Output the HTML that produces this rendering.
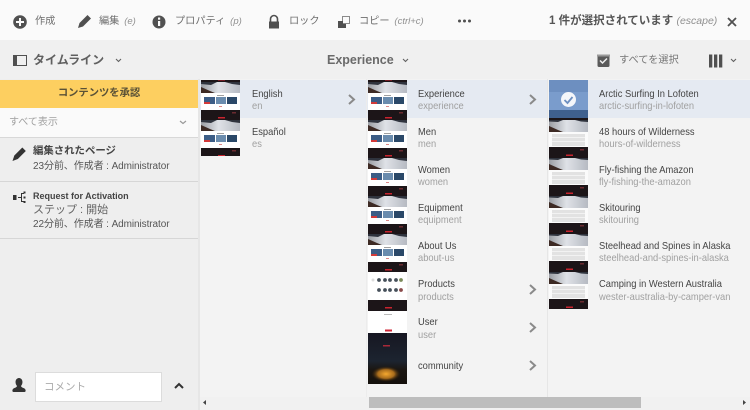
<!DOCTYPE html>
<html><head><meta charset="utf-8">
<style>
html,body{margin:0;padding:0;width:750px;height:410px;overflow:hidden;background:#f3f3f3}
body{font-family:"Liberation Sans","Noto Sans CJK JP",sans-serif;color:#4b4b4b}
#w{position:relative;width:750px;height:410px;overflow:hidden;filter:blur(.3px)}
.a{position:absolute;white-space:nowrap}
.t{font-size:10.5px;color:#444;line-height:12px;transform:scaleX(.89);transform-origin:0 0}
.s{font-size:10.5px;color:#a0a0a0;line-height:12px;transform:scaleX(.89);transform-origin:0 0}
.tb{font-size:10.2px;color:#6e6e6e;line-height:14px}
i{font-size:9.5px;color:#909090;font-style:italic;margin-left:2px}
svg{position:absolute;overflow:visible}
</style></head><body><div id="w">
<div class="a" style="left:0;top:0;width:750px;height:40px;background:#fafafa"></div>
<div class="a" style="left:0;top:40px;width:750px;height:39px;background:#f0f0f0"></div>

<svg style="left:0;top:0" width="750" height="80">
<circle cx="20" cy="22" r="6.800" fill="#505050"/><path d="M20 18v8M16 22h8" stroke="#fafafa" stroke-width="2"/>
<path d="M78 28l1.500-5 8-8 3.500 3.500-8 8z" fill="#505050"/>
<circle cx="159" cy="22" r="6.500" fill="#505050"/><rect x="158" y="21" width="2.200" height="5" fill="#fafafa"/><rect x="158" y="17.500" width="2.200" height="2.200" fill="#fafafa"/>
<path d="M270.500 21.500v-2.500a3.500 3.500 0 0 1 7 0v2.500" fill="none" stroke="#505050" stroke-width="1.600"/><rect x="269" y="21.500" width="10" height="7" fill="#505050"/>
<rect x="342.500" y="16.500" width="7" height="7" fill="#fafafa" stroke="#8a8a8a" stroke-width="1"/><rect x="338" y="21" width="5" height="7" fill="#505050"/><rect x="338" y="24" width="8" height="4" fill="#505050"/>
<circle cx="459.500" cy="21" r="1.500" fill="#505050"/><circle cx="464.500" cy="21" r="1.500" fill="#505050"/><circle cx="469.500" cy="21" r="1.500" fill="#505050"/>
<path d="M728 18l8 8M736 18l-8 8" stroke="#505050" stroke-width="1.800"/>
<rect x="13.500" y="55.500" width="13" height="10" fill="#f0f0f0" stroke="#505050"/><rect x="13.500" y="55.500" width="3.500" height="10" fill="#505050"/>
<path d="M116 59l2.500 2.500L121 59M403 59l2.500 2.500L408 59M731 59l2.500 2.500L736 59" fill="none" stroke="#606060" stroke-width="1.100"/>
<rect x="597.500" y="55" width="12" height="12" rx="1.500" fill="#5a5a5a"/><rect x="597" y="54.500" width="13" height="2" fill="#9a9a9a"/><path d="M600 60.500l2.500 2.500 4.500-4.500" fill="none" stroke="#f0f0f0" stroke-width="1.500"/>
<rect x="709" y="54.500" width="3.300" height="13" fill="#505050"/><rect x="714" y="54.500" width="3.300" height="13" fill="#505050"/><rect x="719" y="54.500" width="3.300" height="13" fill="#505050"/>
</svg>

<div class="a tb" style="left:35px;top:15px">作成</div>
<div class="a tb" style="left:99px;top:15px">編集 <i>(e)</i></div>
<div class="a tb" style="left:175px;top:15px">プロパティ <i>(p)</i></div>
<div class="a tb" style="left:289px;top:15px">ロック</div>
<div class="a tb" style="left:359px;top:15px">コピー <i>(ctrl+c)</i></div>
<div class="a" style="left:549px;top:14px;font-size:11.500px;font-weight:bold;color:#555;line-height:14px">1 件が選択されています <i style="font-size:10.500px;font-weight:normal;margin-left:0">(escape)</i></div>
<div class="a" style="left:33px;top:53px;font-size:12px;font-weight:bold;color:#606060;line-height:14px">タイムライン</div>
<div class="a" style="left:327px;top:53px;font-size:12.500px;font-weight:bold;color:#6a6a6a;line-height:14px">Experience</div>
<div class="a tb" style="left:619px;top:54px;color:#777">すべてを選択</div>

<!-- sidebar -->
<div class="a" style="left:0;top:79px;width:198px;height:331px;background:#eeeeee"></div>
<div class="a" style="left:198px;top:79px;width:2px;height:331px;background:#e6e6e6"></div>
<div class="a" style="left:0;top:80px;width:198px;height:28px;background:#fdcf60;text-align:center;font-size:10.300px;font-weight:bold;color:#5a5136;line-height:27px">コンテンツを承認</div>
<div class="a" style="left:0;top:108px;width:198px;height:30px;background:#fafafa;border-bottom:1px solid #d8d8d8;box-sizing:border-box"></div>
<div class="a" style="left:9px;top:116px;font-size:10px;color:#a0a0a0;line-height:14px">すべて表示</div>
<svg style="left:0;top:0" width="198" height="410">
<path d="M180 121l3 2.500 3-2.500" fill="none" stroke="#999" stroke-width="1.200"/>
<path d="M12.500 161l1.800-5.500 8-8 3.500 3.500-8 8z" fill="#333"/>
<rect x="13" y="195" width="3.500" height="5" fill="#333"/><path d="M18 197.500h3M24 193.500h-2.500v8H24" fill="none" stroke="#333" stroke-width="1"/><rect x="23.500" y="191.500" width="2" height="2" fill="#333"/><rect x="23.500" y="196.500" width="2" height="2" fill="#333"/><rect x="23.500" y="201" width="2" height="2" fill="#333"/>
<path d="M13.500 392c-1.500 0-1.500-2.500 0-3.500 2-1 3-1 3.500-2.500-2-2-2.500-7.500 2-8 4.500.5 4 6 2 8 .5 1.500 1.500 1.500 3.500 2.500 1.500 1 1.500 3.500 0 3.500z" fill="#333"/>
<path d="M175 388l4-4 4 4" fill="none" stroke="#333" stroke-width="2"/>
</svg>
<div class="a" style="left:0;top:181px;width:198px;height:1px;background:#d6d6d6"></div>
<div class="a" style="left:0;top:238px;width:198px;height:1px;background:#d6d6d6"></div>
<div class="a" style="left:33px;top:145px;font-size:10.400px;font-weight:bold;color:#444;line-height:14px">編集されたページ</div>
<div class="a" style="left:33px;top:160px;font-size:10px;color:#555;line-height:13px;letter-spacing:-.08px">23分前、作成者 : Administrator</div>
<div class="a" style="left:33px;top:190px;font-size:9px;font-weight:bold;color:#444;line-height:13px">Request for Activation</div>
<div class="a" style="left:33px;top:203px;font-size:11px;color:#666;line-height:14px">ステップ : 開始</div>
<div class="a" style="left:33px;top:218px;font-size:10px;color:#555;line-height:13px;letter-spacing:-.08px">22分前、作成者 : Administrator</div>
<div class="a" style="left:35px;top:372px;width:127px;height:30px;background:#fff;border:1px solid #dcdcdc;box-sizing:border-box;font-size:10.500px;color:#aaa;line-height:28px;padding-left:8px">コメント</div>

<!-- selected rows -->
<div class="a" style="left:200px;top:80px;width:166px;height:38px;background:#e5eaf2"></div>
<div class="a" style="left:367px;top:80px;width:180px;height:38px;background:#e5eaf2"></div>
<div class="a" style="left:549px;top:80px;width:201px;height:38px;background:#e5eaf2"></div>
<div class="a" style="left:547px;top:79px;width:1px;height:318px;background:#e6e6e6"></div>
<div class="a" style="left:366px;top:79px;width:1px;height:318px;background:#ececec"></div>

<!-- thumbnails -->
<svg style="left:0;top:0" width="750" height="410">
<defs>
<linearGradient id="sn" x1="0" y1="0" x2="1" y2="0"><stop offset="0" stop-color="#9a9da3"/><stop offset=".45" stop-color="#dfe2e7"/><stop offset="1" stop-color="#b6bac2"/></linearGradient>
<g id="h">
<rect width="39" height="10" fill="#1c1518"/><rect x="17" y="7" width="7" height="1.500" fill="#c8242e"/><rect x="31" y="2" width="4" height="1.500" fill="#6b2a30"/>
<rect y="10" width="39" height="11" fill="url(#sn)"/><path d="M0 15l9 4 5 2H0z" fill="#3d2a24"/><path d="M0 10h16l-6 3-10-1zM24 10h15v3l-8-1z" fill="#2f333d"/>
<rect y="21" width="39" height="17" fill="#fff"/><rect x="16" y="23" width="7" height=".8" fill="#888"/>
<rect x="3" y="25" width="11" height="7" fill="#3c5d86"/><rect x="3" y="30" width="6" height="2" fill="#d23a3a"/><rect x="15" y="25" width="10" height="7" fill="#6a8cae"/><rect x="26" y="25" width="10" height="7" fill="#2a4868"/><rect x="18" y="34" width="3" height="1" fill="#d88"/>
</g>
<g id="l">
<rect width="39" height="11" fill="#1c1518"/><rect x="17" y="7.500" width="7" height="1.500" fill="#c8242e"/><rect x="31" y="2" width="4" height="1.500" fill="#6b2a30"/>
<rect y="11" width="39" height="12" fill="url(#sn)"/><path d="M0 17l9 4 5 2H0z" fill="#3d2a24"/><path d="M0 11h14l-5 2-9-.5zM26 11h13v2l-7-.5z" fill="#2f333d"/>
<rect y="23" width="39" height="15" fill="#fbfbfb"/><rect x="3" y="25" width="33" height="12" fill="#e2e2e2"/><rect x="3" y="28" width="33" height="1" fill="#f2f2f2"/><rect x="3" y="32" width="33" height="1" fill="#f2f2f2"/>
</g>
<clipPath id="c1"><rect x="201" y="80" width="39" height="76"/></clipPath>
<clipPath id="c2"><rect x="368" y="80" width="39" height="192"/></clipPath>
<clipPath id="c3"><rect x="549" y="80" width="39" height="229"/></clipPath>
</defs>
<g clip-path="url(#c1)"><use href="#h" x="201" y="72"/><use href="#h" x="201" y="110"/><use href="#h" x="201" y="148"/></g>
<g clip-path="url(#c2)"><use href="#h" x="368" y="72"/><use href="#h" x="368" y="110"/><use href="#h" x="368" y="148"/><use href="#h" x="368" y="186"/><use href="#h" x="368" y="224"/><use href="#h" x="368" y="262"/></g>
<rect x="368" y="272" width="39" height="28" fill="#fff"/>
<g fill="#46505a"><circle cx="373" cy="280" r="1.500" fill="#ddd"/><circle cx="379" cy="280" r="1.900"/><circle cx="385" cy="280" r="1.900"/><circle cx="390" cy="280" r="1.900"/><circle cx="396" cy="280" r="1.900"/><circle cx="401" cy="280" r="1.900" fill="#7a8a5a"/><circle cx="379" cy="290" r="1.900"/><circle cx="385" cy="290" r="1.900"/><circle cx="390" cy="290" r="1.900"/><circle cx="396" cy="290" r="1.900"/><circle cx="401" cy="290" r="1.900" fill="#8a4a4a"/></g>
<rect x="368" y="300" width="39" height="11" fill="#1c1518"/><rect x="385" y="307" width="7" height="1.500" fill="#c8242e"/>
<rect x="368" y="311" width="39" height="22" fill="#fff"/><rect x="384" y="314" width="8" height="1" fill="#bbb"/><rect x="385" y="329.500" width="7" height="2" fill="#d02838"/>
<defs><linearGradient id="ng" x1="0" y1="0" x2="0" y2="1"><stop offset="0" stop-color="#171722"/><stop offset=".55" stop-color="#1c2430"/><stop offset=".72" stop-color="#1a1612"/><stop offset="1" stop-color="#14100c"/></linearGradient>
<radialGradient id="fi"><stop offset="0" stop-color="#f5a82f"/><stop offset=".55" stop-color="#a86c1c"/><stop offset="1" stop-color="#201408" stop-opacity="0"/></radialGradient></defs>
<rect x="368" y="333" width="39" height="51" fill="url(#ng)"/><rect x="383" y="345" width="7" height="1.500" fill="#a82838"/>
<ellipse cx="386" cy="374" rx="15" ry="8" fill="url(#fi)"/>
<g clip-path="url(#c3)"><use href="#l" x="549" y="71"/><use href="#l" x="549" y="109"/><use href="#l" x="549" y="147"/><use href="#l" x="549" y="185"/><use href="#l" x="549" y="223"/><use href="#l" x="549" y="261"/><use href="#l" x="549" y="299"/></g>
<rect x="549" y="80" width="39" height="38" fill="#7a9ccc"/><rect x="549" y="80" width="39" height="12" fill="#6d8fc0"/><rect x="549" y="110" width="39" height="8" fill="#3f608e"/>
<circle cx="568.500" cy="99.500" r="7.500" fill="#f4f6fa"/><path d="M564.500 100l3 3 5-6" fill="none" stroke="#6d8fc0" stroke-width="1.800"/>
<g fill="none" stroke="#8a8a8a" stroke-width="2"><path d="M349 95l5 4.500-5 4.500"/><path d="M530 95l5 4.500-5 4.500"/><path d="M530 285l5 4.500-5 4.500"/><path d="M530 323l5 4.500-5 4.500"/><path d="M530 361l5 4.500-5 4.500"/></g>
<rect x="200" y="397" width="550" height="13" fill="#f1f1f1"/><rect x="369" y="397" width="272" height="11" fill="#bdbdbd"/>
<path d="M206 400v5l-3-2.500zM743 400v5l3-2.500z" fill="#444"/>
</svg>

<div class="a t" style="left:252px;top:88px">English</div><div class="a s" style="left:252px;top:100px">en</div>
<div class="a t" style="left:252px;top:126px">Español</div><div class="a s" style="left:252px;top:138px">es</div>

<div class="a t" style="left:418px;top:88px">Experience</div><div class="a s" style="left:418px;top:100px">experience</div>
<div class="a t" style="left:418px;top:126px">Men</div><div class="a s" style="left:418px;top:138px">men</div>
<div class="a t" style="left:418px;top:164px">Women</div><div class="a s" style="left:418px;top:176px">women</div>
<div class="a t" style="left:418px;top:202px">Equipment</div><div class="a s" style="left:418px;top:214px">equipment</div>
<div class="a t" style="left:418px;top:240px">About Us</div><div class="a s" style="left:418px;top:252px">about-us</div>
<div class="a t" style="left:418px;top:278px">Products</div><div class="a s" style="left:418px;top:291px">products</div>
<div class="a t" style="left:418px;top:316px">User</div><div class="a s" style="left:418px;top:329px">user</div>
<div class="a t" style="left:418px;top:360px">community</div>

<div class="a t" style="left:599px;top:88px">Arctic Surfing In Lofoten</div><div class="a s" style="left:599px;top:100px">arctic-surfing-in-lofoten</div>
<div class="a t" style="left:599px;top:126px">48 hours of Wilderness</div><div class="a s" style="left:599px;top:138px">hours-of-wilderness</div>
<div class="a t" style="left:599px;top:164px">Fly-fishing the Amazon</div><div class="a s" style="left:599px;top:176px">fly-fishing-the-amazon</div>
<div class="a t" style="left:599px;top:202px">Skitouring</div><div class="a s" style="left:599px;top:214px">skitouring</div>
<div class="a t" style="left:599px;top:240px">Steelhead and Spines in Alaska</div><div class="a s" style="left:599px;top:252px">steelhead-and-spines-in-alaska</div>
<div class="a t" style="left:599px;top:278px">Camping in Western Australia</div><div class="a s" style="left:599px;top:291px">wester-australia-by-camper-van</div>
</div></body></html>
